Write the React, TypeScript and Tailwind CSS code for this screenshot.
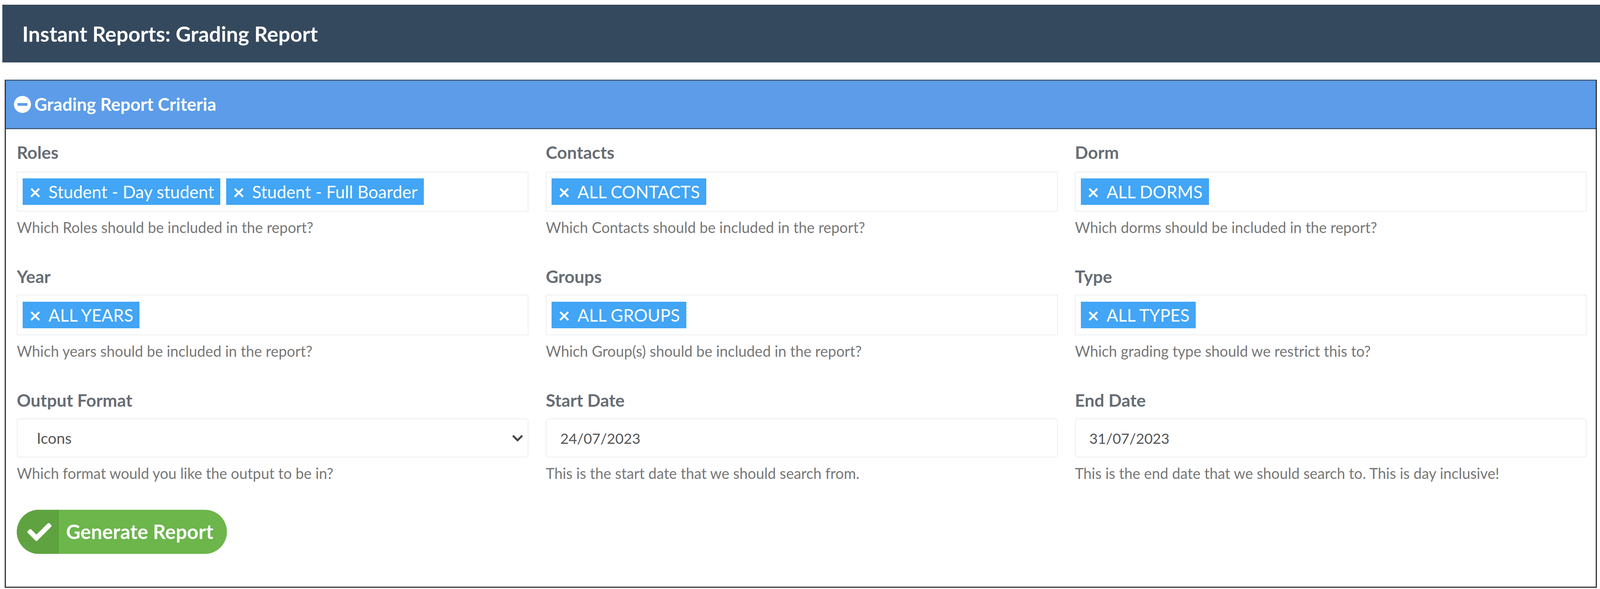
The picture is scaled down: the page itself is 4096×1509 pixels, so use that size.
import { FaCheck, FaMinusCircle } from 'react-icons/fa'

const lato = 'font-["Lato","Liberation_Sans",sans-serif]'

function Tag({ label }: { label: string }) {
  return (
    <span className="flex items-center h-[68px] pl-[17px] pr-[16px] bg-[#42a5f5] text-white text-[44px] whitespace-nowrap">
      <span className="w-[49px] text-[52px] font-bold leading-none">×</span>
      {label}
    </span>
  )
}

function Help({ children }: { children: string }) {
  return <p className="mt-[20px] text-[37.7px] leading-[42px] text-[#777777] whitespace-nowrap">{children}</p>
}

function Label({ children, className }: { children: string; className: string }) {
  return (
    <label className={`block text-[44.4px] leading-[54px] font-bold text-[#676d75] ${className}`}>
      {children}
    </label>
  )
}

function TagField({ label, tags, help, first }: { label: string; tags: string[]; help: string; first?: boolean }) {
  return (
    <div>
      <Label className={first ? 'h-[77px]' : 'h-[74px]'}>{label}</Label>
      <div className={`flex items-center gap-[15px] px-[13px] border-2 border-[#eeeeee] ${first ? 'h-[102px]' : 'h-[104px]'}`}>
        {tags.map(t => <Tag key={t} label={t} />)}
      </div>
      <Help>{help}</Help>
    </div>
  )
}

function DateField({ label, value, help }: { label: string; value: string; help: string }) {
  return (
    <div>
      <Label className="h-[74px]">{label}</Label>
      <input
        readOnly
        value={value}
        className="block w-full h-[100px] px-[35px] border-2 border-[#eeeeee] rounded-[8px] text-[37px] tabular-nums text-[#555555] outline-none"
      />
      <Help>{help}</Help>
    </div>
  )
}

export default function App() {
  return (
    <main className={`h-[1509px] w-full overflow-hidden bg-white pt-[12px] ${lato}`}>
      <header className="flex items-center h-[148px] ml-[6px] pl-[51px] bg-[#35495e] text-white text-[53.7px] font-bold">
        Instant Reports: Grading Report
      </header>

      <section className="flex flex-col h-[1302px] mt-[44px] ml-[12px] mr-[8px] border-[3px] border-[#333333] border-t-[#44607f]">
        <div className="flex items-center gap-[8px] h-[124px] pl-[20px] bg-[#5c9ce8] border-b-[3px] border-[#44607f] text-white text-[45px] font-bold">
          <FaMinusCircle className="w-[45px] h-[45px]" />
          Grading Report Criteria
        </div>

        <div className="pl-[28px] pr-[23px] pt-[32px]">
          <div className="grid grid-cols-3 gap-x-[44px] gap-y-[77px]">
            <TagField
              first
              label="Roles"
              tags={['Student - Day student', 'Student - Full Boarder']}
              help="Which Roles should be included in the report?"
            />
            <TagField first label="Contacts" tags={['ALL CONTACTS']} help="Which Contacts should be included in the report?" />
            <TagField first label="Dorm" tags={['ALL DORMS']} help="Which dorms should be included in the report?" />
            <TagField label="Year" tags={['ALL YEARS']} help="Which years should be included in the report?" />
            <TagField label="Groups" tags={['ALL GROUPS']} help="Which Group(s) should be included in the report?" />
            <TagField label="Type" tags={['ALL TYPES']} help="Which grading type should we restrict this to?" />

            <div>
              <Label className="h-[74px]">Output Format</Label>
              <div className="relative">
                <select className="block w-full h-[100px] pl-[49px] border-2 border-[#eeeeee] rounded-[8px] text-[39px] text-[#555555] appearance-none bg-white outline-none">
                  <option>Icons</option>
                </select>
                <svg viewBox="0 0 28 18" className="absolute right-[14px] top-[41px] w-[28px] h-[18px]" fill="none" stroke="#444444" strokeWidth="5">
                  <path d="M2 3l12 12L26 3" />
                </svg>
              </div>
              <Help>Which format would you like the output to be in?</Help>
            </div>
            <DateField label="Start Date" value="24/07/2023" help="This is the start date that we should search from." />
            <DateField
              label="End Date"
              value="31/07/2023"
              help="This is the end date that we should search to. This is day inclusive!"
            />
          </div>

          <button className="flex items-stretch mt-[72px] w-[538px] h-[113px] rounded-full overflow-hidden bg-[#6cb64c] text-white text-[51px] font-bold">
            <span className="flex items-center justify-center w-[107px] bg-[#5fa340] border-r-2 border-[#579a3a]">
              <FaCheck className="w-[62px] h-[62px] ml-[10px]" />
            </span>
            <span className="flex items-center pl-[19px]">Generate Report</span>
          </button>
        </div>
      </section>
    </main>
  )
}
